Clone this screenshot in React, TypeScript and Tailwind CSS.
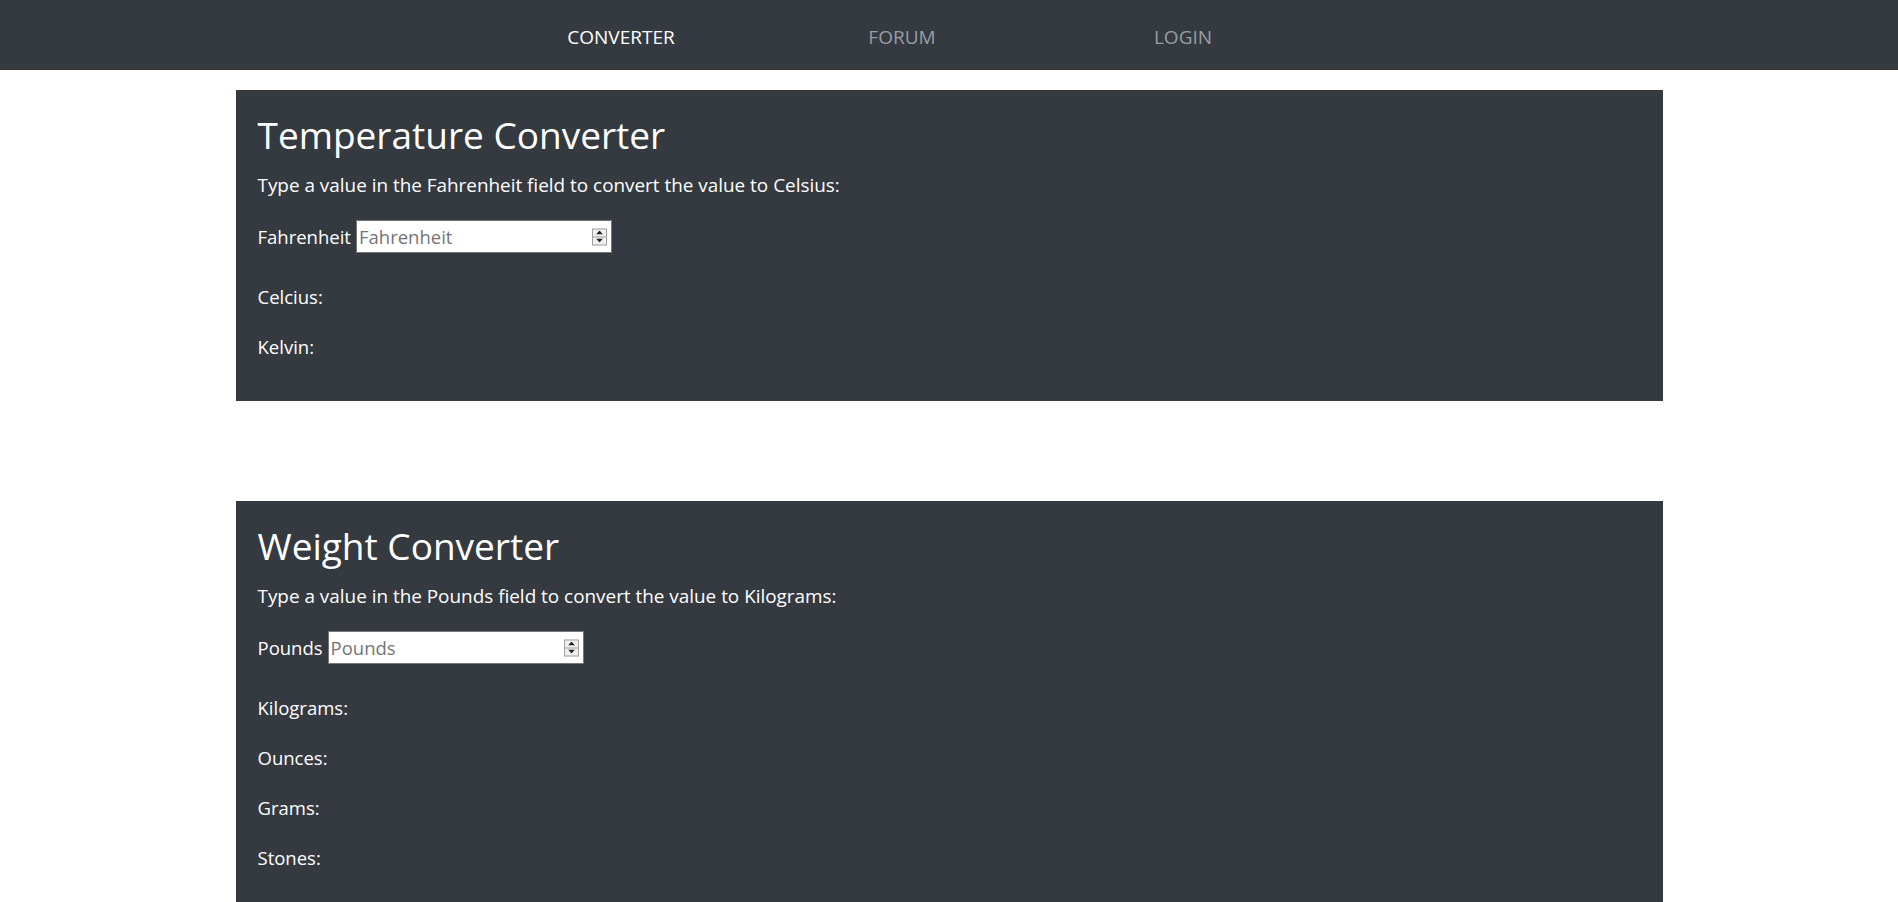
const navItems = [
    { label: "CONVERTER", active: true },
    { label: "FORUM", active: false },
    { label: "LOGIN", active: false },
];

const Spinner = () => (
    <div className="absolute right-[5px] top-1/2 -translate-y-1/2 flex flex-col w-[15px] h-[17px] border border-[#a0a0a0] bg-[#f0f0f0]">
        <div className="flex-1 flex items-center justify-center border-b border-[#a0a0a0]">
            <svg width="7" height="4" viewBox="0 0 7 4">
                <path d="M0 4 L3.5 0 L7 4 Z" fill="#222" />
            </svg>
        </div>
        <div className="flex-1 flex items-center justify-center">
            <svg width="7" height="4" viewBox="0 0 7 4">
                <path d="M0 0 L3.5 4 L7 0 Z" fill="#222" />
            </svg>
        </div>
    </div>
);

type ConverterProps = {
    title: string;
    from: string;
    to: string;
    results: string[];
};

const Converter = ({ title, from, to, results }: ConverterProps) => (
    <section className="bg-[#343a40] text-white pl-[22px] pr-5 pt-[21px] pb-[42px]">
        <h1 className="text-[37px] leading-[48px] font-normal mb-[14px]">{title}</h1>
        <p className="leading-6 text-[18.9px]">
            Type a value in the {from} field to convert the value to {to}:
        </p>
        <div className="mt-[23px] flex items-center h-[33px]">
            <label className="mr-[5px]">{from}</label>
            <div className="relative">
                <input
                    type="text"
                    placeholder={from}
                    className="w-[256px] h-[33px] bg-white border border-[#767676] px-[2px] text-[18.5px] text-black placeholder:text-[#757575] outline-none"
                />
                <Spinner />
            </div>
        </div>
        <div className="mt-[32px] flex flex-col gap-[26px]">
            {results.map((r) => (
                <p key={r} className="leading-6">
                    {r}:
                </p>
            ))}
        </div>
    </section>
);

export default function App() {
    return (
        <div className="min-h-screen bg-white font-['Open_Sans',sans-serif] text-[18.5px]">
            <nav className="h-[70px] bg-[#343a40] flex items-center justify-center pr-[94px] pt-[5px]">
                {navItems.map((item) => (
                    <a
                        key={item.label}
                        href="#"
                        className={`w-[281px] text-center text-[19px] ${
                            item.active ? "text-white" : "text-[#9a9da0]"
                        }`}
                    >
                        {item.label}
                    </a>
                ))}
            </nav>
            <main className="w-[1427px] mx-auto pt-[20px] flex flex-col gap-[100px]">
                <Converter
                    title="Temperature Converter"
                    from="Fahrenheit"
                    to="Celsius"
                    results={["Celcius", "Kelvin"]}
                />
                <Converter
                    title="Weight Converter"
                    from="Pounds"
                    to="Kilograms"
                    results={["Kilograms", "Ounces", "Grams", "Stones"]}
                />
            </main>
        </div>
    );
}
